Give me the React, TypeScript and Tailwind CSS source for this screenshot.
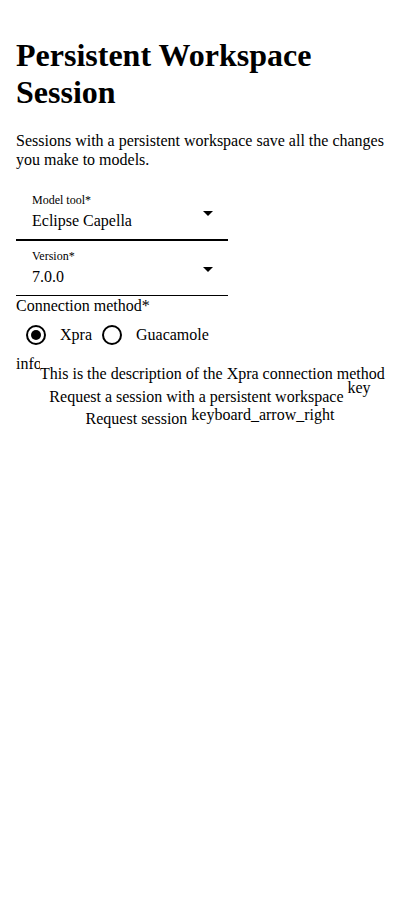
import React from "react";

function Arrow({ mb }: { mb: string }) {
  return (
    <span
      className={`block w-0 h-0 border-l-[5px] border-r-[5px] border-t-[5px] border-l-transparent border-r-transparent border-t-black self-end ${mb}`}
    />
  );
}

export default function App() {
  return (
    <div
      className="px-4 pt-4 text-black text-[16px] leading-[1.15] min-h-[920px] bg-white"
      style={{ fontFamily: '"Liberation Serif", "Times New Roman", serif' }}
    >
      <h1 className="text-[32px] font-bold leading-[1.15] my-[21.44px]">
        Persistent Workspace Session
      </h1>
      <p className="mb-4">
        Sessions with a persistent workspace save all the changes you make to models.
      </p>

      {/* Model tool field */}
      <div className="w-[212px] border-b-2 border-black pt-[8.5px] pb-[8.5px] pl-4 pr-[15px] flex">
        <div className="flex-1 flex flex-col">
          <span className="text-[12px] leading-[1.15]">Model tool*</span>
          <span className="mt-[4.5px]">Eclipse Capella</span>
        </div>
        <Arrow mb="mb-[14px]" />
      </div>

      {/* Version field */}
      <div className="w-[212px] border-b border-black pt-[8.8px] pb-[8.5px] pl-4 pr-[15px] flex">
        <div className="flex-1 flex flex-col">
          <span className="text-[12px] leading-[1.15]">Version*</span>
          <span className="mt-[4.5px]">7.0.0</span>
        </div>
        <Arrow mb="mb-[14px]" />
      </div>

      <div className="mt-px">Connection method*</div>

      <div className="flex items-center h-10">
        <label className="flex items-center">
          <span className="w-10 h-10 flex items-center justify-center">
            <span className="w-5 h-5 rounded-full border-2 border-black flex items-center justify-center">
              <span className="w-[10px] h-[10px] rounded-full bg-black" />
            </span>
          </span>
          <span className="pl-1">Xpra</span>
        </label>
        <label className="flex items-center">
          <span className="w-10 h-10 flex items-center justify-center">
            <span className="w-5 h-5 rounded-full border-2 border-black" />
          </span>
          <span className="pl-1">Guacamole</span>
        </label>
      </div>

      <div>
        <span className="inline-block w-6 h-6 overflow-hidden align-baseline whitespace-nowrap">
          info
        </span>
        This is the description of the Xpra connection method
      </div>

      <div className="text-center leading-[26px] -mx-4">
        Request a session with a persistent workspace{" "}
        <span className="leading-[0] align-[9px]">key</span>
      </div>
      <div className="text-center leading-[18px] -mx-4">
        Request session{" "}
        <span className="leading-[0] align-[4px]">keyboard_arrow_right</span>
      </div>
    </div>
  );
}
